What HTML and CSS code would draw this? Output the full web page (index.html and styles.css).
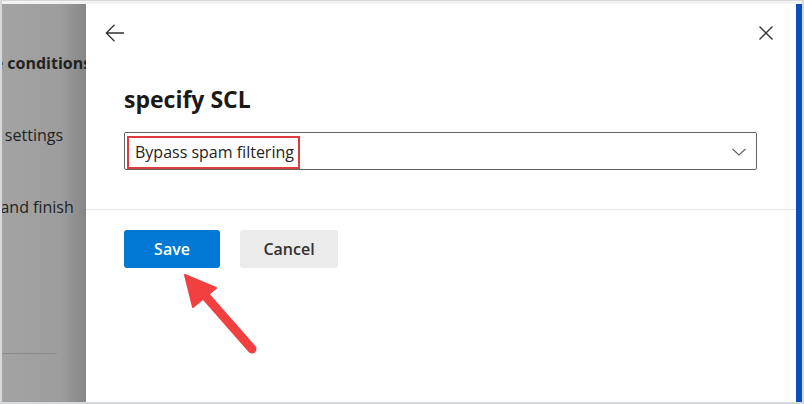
FILE: index.html
```html
<!DOCTYPE html>
<html>
<head>
    <meta charset="utf-8">
    <title>specify SCL</title>
    <link rel="stylesheet" href="styles.css">
</head>
<body>

    <div class="frame">
        <div class="screen">
            <!-- 左侧被遮罩的向导步骤 -->
            <div class="backdrop">
                <ul class="steps">
                    <li class="step current"><span class="step-text" style="margin-left:-31px">rule conditions</span></li>
                    <li class="step"><span class="step-text" style="margin-left:-34px">Rule settings</span></li>
                    <li class="step"><span class="step-text" style="margin-left:-58px">Review and finish</span></li>
                </ul>
                <div class="steps-rule"></div>
            </div>

            <!-- 右侧面板 -->
            <div class="panel">
                <div class="panel-header">
                    <button class="icon-btn" title="Back">
                        <svg width="20" height="20" viewBox="0 0 20 20">
                            <path d="M19 10H1.5M9.5 1.8L1.3 10l8.2 8.2" fill="none" stroke="#323130" stroke-width="1.3"/>
                        </svg>
                    </button>
                    <button class="icon-btn" title="Close">
                        <svg width="16" height="16" viewBox="0 0 16 16">
                            <path d="M1.5 1.5l13 13M14.5 1.5l-13 13" fill="none" stroke="#323130" stroke-width="1.3"/>
                        </svg>
                    </button>
                </div>

                <div class="panel-body">
                    <h1 class="panel-title">specify SCL</h1>
                    <div class="dropdown">
                        <span class="dropdown-value">Bypass spam filtering</span>
                        <svg class="dropdown-chevron" width="16" height="16" viewBox="0 0 16 16">
                            <path d="M1.5 5l6.5 6 6.5-6" fill="none" stroke="#605e5c" stroke-width="1.1"/>
                        </svg>
                    </div>
                </div>

                <div class="panel-footer">
                    <button class="btn primary">Save</button>
                    <button class="btn secondary">Cancel</button>
                </div>
            </div>

            <div class="edge"></div>
        </div>

        <!-- 标注箭头 -->
        <svg class="callout" width="804" height="404" viewBox="0 0 804 404">
            <path d="M252 349L202 292" stroke="#f23f3f" stroke-width="9" stroke-linecap="round"/>
            <path d="M185 275L216 288L193 307Z" fill="#f23f3f" stroke="#f23f3f" stroke-width="2" stroke-linejoin="round"/>
        </svg>
    </div>

</body>
</html>
```

FILE: styles.css
```css
* {
    margin: 0;
    padding: 0;
    box-sizing: border-box;
}

body {
    font-family: "Open Sans", "Noto Sans", Arial, sans-serif;
    font-size: 16px;
    color: #323130;
    background: #d6d8da;
}

.frame {
    position: relative;
    width: 804px;
    height: 404px;
    border: 2px solid #d6d8da;
    border-top-width: 1px;
}

.screen {
    display: flex;
    height: 100%;
    border-top: 3px solid #f1f2f3;
}

.backdrop {
    width: 84px;
    flex-shrink: 0;
    overflow: hidden;
    background: linear-gradient(to right, #a3a3a3 0%, #9d9d9d 70%, #868686 100%);
}

.steps {
    list-style: none;
    padding-top: 23px;
}

.step {
    height: 72px;
    line-height: 72px;
    white-space: nowrap;
    font-size: 16px;
    color: #222;
}

.step.current {
    font-weight: 700;
}

.steps-rule {
    margin-top: 110px;
    width: 55px;
    border-top: 1px solid #8a8a8a;
}

.panel {
    flex: 1;
    background: #fff;
}

.panel-header {
    display: flex;
    justify-content: space-between;
    align-items: center;
    padding: 19px 20px 0 19px;
}

.icon-btn {
    display: flex;
    align-items: center;
    justify-content: center;
    width: 20px;
    height: 20px;
    border: none;
    background: none;
}

.panel-body {
    padding: 41px 39px 39px 38px;
    border-bottom: 1px solid #e6e6e6;
}

.panel-title {
    font-size: 23px;
    line-height: 30px;
    font-weight: 700;
    color: #1b1a19;
    margin-bottom: 18px;
}

.dropdown {
    display: flex;
    align-items: flex-start;
    justify-content: space-between;
    height: 38px;
    padding: 3px 9px 0 2px;
    border: 1px solid #626262;
    border-radius: 2px;
}

.dropdown-value {
    display: inline-block;
    height: 33px;
    line-height: 29px;
    padding: 0 4px 0 6px;
    border: 2px solid #e23b3e;
    font-size: 16px;
    color: #252423;
}

.dropdown-chevron {
    margin-top: 8px;
}

.panel-footer {
    display: flex;
    gap: 20px;
    padding: 20px 38px;
}

.btn {
    height: 38px;
    border: none;
    border-radius: 3px;
    font-family: inherit;
    font-size: 16px;
    font-weight: 600;
}

.btn.primary {
    width: 96px;
    background: #0078d4;
    color: #fff;
}

.btn.secondary {
    width: 98px;
    background: #ebebeb;
    color: #323130;
}

.edge {
    width: 6px;
    flex-shrink: 0;
    background: #0a4fbf;
}

.callout {
    position: absolute;
    top: -1px;
    left: -2px;
    pointer-events: none;
}
```
